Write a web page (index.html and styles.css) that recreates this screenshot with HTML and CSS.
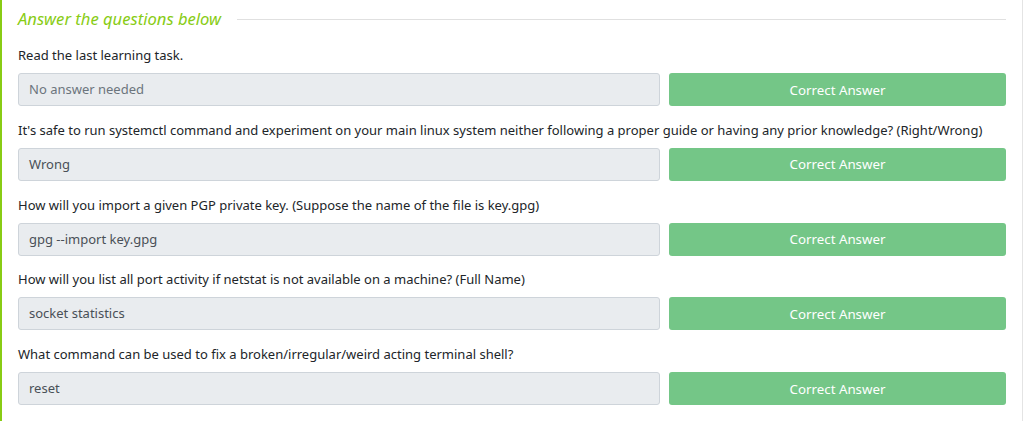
FILE: index.html
```html
<!DOCTYPE html>
<html>
<head>
<meta charset="utf-8">
<link rel="stylesheet" href="styles.css">
</head>
<body>
<div class="panel">
  <div class="heading">
    <span class="heading-text">Answer the questions below</span>
    <span class="heading-rule"></span>
  </div>
  <div class="question">
    <p class="q-text">Read the last learning task.</p>
    <div class="q-row">
      <div class="answer muted">No answer needed</div>
      <button class="btn">Correct Answer</button>
    </div>
  </div>
  <div class="question">
    <p class="q-text">It's safe to run systemctl command and experiment on your main linux system neither following a proper guide or having any prior knowledge? (Right/Wrong)</p>
    <div class="q-row">
      <div class="answer">Wrong</div>
      <button class="btn">Correct Answer</button>
    </div>
  </div>
  <div class="question">
    <p class="q-text">How will you import a given PGP private key. (Suppose the name of the file is key.gpg)</p>
    <div class="q-row">
      <div class="answer">gpg --import key.gpg</div>
      <button class="btn">Correct Answer</button>
    </div>
  </div>
  <div class="question">
    <p class="q-text">How will you list all port activity if netstat is not available on a machine? (Full Name)</p>
    <div class="q-row">
      <div class="answer">socket statistics</div>
      <button class="btn">Correct Answer</button>
    </div>
  </div>
  <div class="question">
    <p class="q-text">What command can be used to fix a broken/irregular/weird acting terminal shell?</p>
    <div class="q-row">
      <div class="answer">reset</div>
      <button class="btn">Correct Answer</button>
    </div>
  </div>
</div>
</body>
</html>
```
FILE: styles.css
```css
* { box-sizing: border-box; }
html, body { margin: 0; padding: 0; background: #ffffff; }
body {
  font-family: "Noto Sans", "Open Sans", sans-serif;
  color: #212529;
  width: 1024px;
  height: 421px;
  overflow: hidden;
}
.panel {
  height: 421px;
  border-left: 2px solid #88cc14;
  border-right: 1px solid #e4e4e4;
  margin-right: 1px;
  padding: 6px 16px 0 16px;
}
.heading {
  display: flex;
  align-items: center;
  gap: 16px;
  height: 25px;
}
.heading-text {
  color: #88cc14;
  font-style: italic;
  font-size: 16.6px;
  white-space: nowrap;
}
.heading-rule {
  flex: 1;
  height: 1px;
  background: #e0e0e0;
  margin-top: 2px;
}
.question { margin-top: 14px; }
.question + .question { margin-top: 13.75px; }
.q-text {
  margin: 0 0 8px 0;
  font-size: 13px;
  line-height: 20px;
  white-space: nowrap;
}
.q-row {
  display: flex;
  gap: 9px;
}
.answer {
  flex: 0 0 642px;
  height: 33px;
  background: #e9ecef;
  border: 1px solid #ced4da;
  border-radius: 3px;
  padding: 0 10px;
  font-size: 13px;
  line-height: 31px;
  color: #495057;
}
.answer.muted { color: #6c757d; }
.btn {
  flex: 0 0 337px;
  height: 33px;
  background: #74c687;
  border: none;
  border-radius: 3px;
  color: #ffffff;
  font-family: inherit;
  font-size: 13.3px;
  padding: 0;
}
```
